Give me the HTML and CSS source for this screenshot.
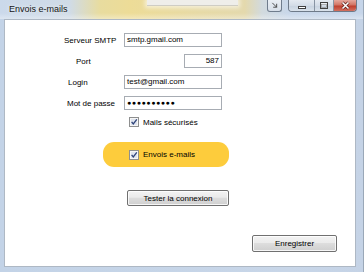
FILE: index.html
```html
<!DOCTYPE html>
<html lang="fr">
<head>
<meta charset="utf-8">
<title>Envois e-mails</title>
<link rel="stylesheet" href="styles.css">
</head>
<body>
<div class="window">
  <div class="titlebar">
    <div class="ghost"></div>
    <span class="title">Envois e-mails</span>
    <div class="dock-btn">
      <svg width="15" height="11" viewBox="0 0 15 11"><path d="M5 2.5 L10 7.5 M10 3.5 V7.5 H6" stroke="#3a3a3a" stroke-width="1" fill="none"/></svg>
    </div>
    <div class="controls">
      <div class="ctl min"><svg width="10" height="6" viewBox="0 0 10 6"><rect x="1.5" y="2.5" width="7" height="2" fill="#fff" stroke="#404040"/></svg></div>
      <div class="ctl max"><svg width="10" height="8" viewBox="0 0 10 8"><rect x="1.5" y="0.5" width="7" height="6" fill="none" stroke="#404040"/><rect x="2.5" y="1.5" width="5" height="1" fill="#fff"/><rect x="2.5" y="2.5" width="5" height="3" fill="none" stroke="#888" stroke-width="0.6"/></svg></div>
      <div class="ctl close"><svg width="11" height="9" viewBox="0 0 11 9"><path d="M2.5 1.5 L8.5 7.5 M8.5 1.5 L2.5 7.5" stroke="#5a1a14" stroke-width="3"/><path d="M2.5 1.5 L8.5 7.5 M8.5 1.5 L2.5 7.5" stroke="#fff" stroke-width="1.6"/></svg></div>
    </div>
  </div>
  <div class="client">
    <div class="form">
      <label class="lbl lbl-smtp">Serveur SMTP</label>
      <div class="field">smtp.gmail.com</div>
      <label class="lbl lbl-port">Port</label>
      <div class="field field-port">587</div>
      <label class="lbl lbl-login">Login</label>
      <div class="field">test@gmail.com</div>
      <label class="lbl lbl-pass">Mot de passe</label>
      <div class="field field-pass">&#9679;&#9679;&#9679;&#9679;&#9679;&#9679;&#9679;&#9679;&#9679;&#9679;</div>
      <div class="check check-secure">
        <svg class="box" width="10" height="10" viewBox="0 0 10 10"><rect x="0.5" y="0.5" width="9" height="9" fill="#f6f6f6" stroke="#8e8f8f"/><rect x="2" y="2" width="6" height="6" fill="#dfe4ee"/><path d="M2.6 4.8 L4.3 6.9 L7.8 2.4" stroke="#2e4379" stroke-width="1.3" fill="none"/></svg>
        <span>Mails sécurisés</span>
      </div>
    </div>
    <div class="pill">
      <div class="check">
        <svg class="box" width="10" height="10" viewBox="0 0 10 10"><rect x="0.5" y="0.5" width="9" height="9" fill="#f6f6f6" stroke="#8e8f8f"/><rect x="2" y="2" width="6" height="6" fill="#dfe4ee"/><path d="M2.6 4.8 L4.3 6.9 L7.8 2.4" stroke="#2e4379" stroke-width="1.3" fill="none"/></svg>
        <span>Envois e-mails</span>
      </div>
    </div>
    <button class="btn btn-test">Tester la connexion</button>
    <button class="btn btn-save">Enregistrer</button>
  </div>
</div>
</body>
</html>
```

FILE: styles.css
```css
* { box-sizing: border-box; }
html, body { margin: 0; padding: 0; }
body {
  width: 364px;
  height: 272px;
  overflow: hidden;
  font-family: "Liberation Sans", Arial, sans-serif;
  font-size: 8px;
  color: #000;
  background: #c6d5e8;
}
.window {
  width: 364px;
  height: 272px;
  display: flex;
  flex-direction: column;
  background: linear-gradient(90deg, #c3d3e7 0, #c8d6e8 80%, #c5d3e6 100%);
  border-right: 1px solid #9aa8b8;
}
.titlebar {
  position: relative;
  height: 19px;
  display: flex;
  align-items: flex-start;
  background:
    linear-gradient(180deg, rgba(255,255,255,0) 0, rgba(255,255,255,0) 13px, rgba(255,255,255,0.35) 19px),
    linear-gradient(90deg, #cbd9eb 0, #d0dbe6 70px, #e8dc9f 100px, #eddc97 130px, #e7daa6 200px, #e4d9ad 245px, #d2dade 262px, #c8d7ea 290px, #c6d5e9 364px);
}
.ghost {
  position: absolute;
  left: 147px;
  top: 0;
  width: 91px;
  height: 6px;
  background: #efeeea;
  box-shadow: 0 0 4px 2px rgba(255,255,255,0.6);
  border-bottom: 1px solid #cfcdc4;
}
.title {
  position: relative;
  flex: 1;
  padding-left: 9px;
  line-height: 19px;
  font-size: 9px;
  color: #151515;
  text-shadow: 0 0 4px rgba(255,255,255,0.9);
}
.dock-btn {
  width: 15px;
  height: 12px;
  margin-right: 6px;
  border: 1px solid #6f7c8c;
  border-top: none;
  border-radius: 0 0 3px 3px;
  background: linear-gradient(180deg, #e9eef4, #d7dfe9);
  display: flex;
  align-items: center;
  justify-content: center;
}
.controls {
  display: flex;
  margin-right: 6px;
  height: 12px;
  border: 1px solid #6e7a89;
  border-top: none;
  border-radius: 0 0 4px 4px;
  overflow: hidden;
}
.ctl {
  display: flex;
  align-items: center;
  justify-content: center;
  height: 11px;
}
.min, .max {
  background: linear-gradient(180deg, #e4eaf1 0, #d3dce7 50%, #c7d2df 51%, #d9e2ec 100%);
  border-right: 1px solid #8894a3;
}
.min { width: 26px; }
.min svg { margin-top: 3px; }
.max { width: 19px; }
.close {
  width: 22px;
  background: linear-gradient(180deg, #e6a89d 0, #d27565 45%, #c0402f 55%, #d2705f 100%);
}
.client {
  flex: 1;
  margin: 0 7px 5px 4px;
  border: 1px solid #aeb8c4;
  background: #fff;
  display: flex;
  flex-direction: column;
  align-items: flex-start;
}
.form {
  margin: 13px 0 0 57px;
  display: grid;
  grid-template-columns: 56px 98px;
  grid-template-rows: 14px 14px 14px 14px 10px;
  column-gap: 6px;
  row-gap: 7px;
  align-items: center;
}
.lbl { white-space: nowrap; }
.lbl-smtp { padding-left: 2px; }
.lbl-port { padding-left: 14px; }
.lbl-login { padding-left: 6px; }
.lbl-pass { padding-left: 5px; }
.field {
  height: 14px;
  border: 1px solid #a7acb3;
  padding: 0 2px;
  line-height: 12px;
  white-space: nowrap;
  overflow: hidden;
}
.field-port {
  width: 38px;
  justify-self: end;
  text-align: right;
}
.field-pass {
  font-size: 7px;
  letter-spacing: 0.6px;
}
.check {
  display: flex;
  align-items: center;
  gap: 4px;
}
.check-secure {
  grid-column: 2;
  padding-left: 5px;
  height: 10px;
}
.box { flex: none; }
.pill {
  margin: 15px 0 0 98px;
  width: 126px;
  height: 25px;
  border-radius: 11px;
  background: #fdcc3c;
  display: flex;
  align-items: center;
  padding-left: 26px;
}
.btn {
  font-family: "Liberation Sans", Arial, sans-serif;
  font-size: 8px;
  color: #000;
  padding: 0;
  border: 1px solid #707070;
  border-radius: 2px;
  background: linear-gradient(180deg, #f3f3f3 0, #ebebeb 45%, #dddddd 50%, #cfcfcf 100%);
  box-shadow: inset 0 0 0 1px rgba(255,255,255,0.8);
}
.btn-test {
  margin: 23px 0 0 122px;
  width: 102px;
  height: 16px;
}
.btn-save {
  margin: 29px 0 0 247px;
  width: 85px;
  height: 17px;
}
```
